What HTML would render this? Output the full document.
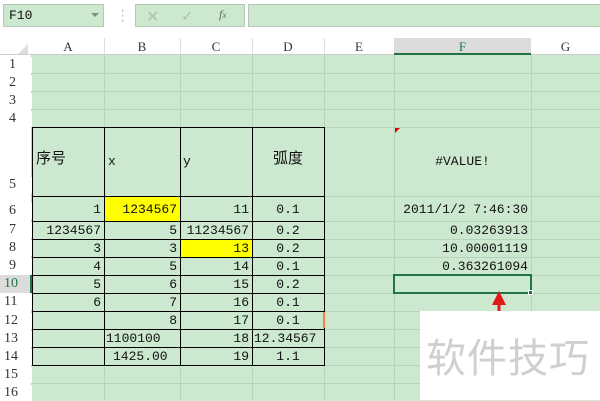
<!DOCTYPE html>
<html><head><meta charset="utf-8"><style>
*{margin:0;padding:0;box-sizing:border-box}
body{width:600px;height:400px;overflow:hidden;background:#cce8cf;position:relative;font-family:"Liberation Mono","Noto Sans CJK SC",monospace;font-size:13px;color:#111}
.a{position:absolute}
.vl{position:absolute;width:1px;background:#b5d4b9}
.hl{position:absolute;height:1px;background:#b5d4b9}
.bv{position:absolute;width:1px;background:#000}
.bh{position:absolute;height:1px;background:#000}
.c{position:absolute;height:18px;line-height:18px;white-space:nowrap}
.r{text-align:right}
.rh{position:absolute;left:0;width:32px;font-family:"Liberation Serif",serif;font-size:14px;padding-left:9px;color:#333;background:#fff}
.ch{position:absolute;top:38px;height:17px;line-height:17px;text-align:center;font-family:"Liberation Serif",serif;font-size:13px;color:#333}
</style></head><body>
<!-- toolbar -->
<div class="a" style="left:0;top:0;width:600px;height:55px;background:#fff"></div>
<div class="a" style="left:3px;top:4px;width:101px;height:23px;background:#cce8cf;border:1px solid #b8c8b8;font-family:'Liberation Mono',monospace;font-size:13px;line-height:21px;padding-left:5px">F10</div>
<div class="a" style="left:91px;top:13px;width:0;height:0;border-left:4px solid transparent;border-right:4px solid transparent;border-top:4px solid #888"></div>
<div class="a" style="left:119px;top:9px;color:#bbb;font-size:12px;line-height:5px">·<br>·<br>·</div>
<div class="a" style="left:135px;top:4px;width:110px;height:23px;background:#cce8cf;border:1px solid #b8c8b8"></div>
<div class="a" style="left:146px;top:7px;color:#b0bfb0;font-size:16px;font-family:'DejaVu Sans',sans-serif">✕</div>
<div class="a" style="left:181px;top:7px;color:#b0bfb0;font-size:15px;font-family:'DejaVu Sans',sans-serif">✓</div>
<div class="a" style="left:219px;top:7px;color:#666;font-size:12px;font-style:italic;font-family:'Liberation Serif',serif">f<span style="font-size:9px">x</span></div>
<div class="a" style="left:248px;top:4px;width:352px;height:23px;background:#cce8cf;border:1px solid #b8c8b8;border-right:none"></div>
<!-- column headers -->
<div class="a" style="left:0;top:38px;width:600px;height:17px;background:#fff;border-bottom:1px solid #ccc"></div>
<div class="a" style="left:18px;top:44px;width:0;height:0;border-left:10px solid transparent;border-bottom:10px solid #ddd"></div>
<div class="a" style="left:394px;top:38px;width:137px;height:17px;background:#dcdcdc;border-bottom:2px solid #217346"></div>
<div class="ch" style="left:32px;width:72px">A</div>
<div class="ch" style="left:104px;width:76px">B</div>
<div class="ch" style="left:180px;width:72px">C</div>
<div class="ch" style="left:252px;width:72px">D</div>
<div class="ch" style="left:324px;width:70px">E</div>
<div class="ch" style="left:394px;width:137px;color:#217346">F</div>
<div class="ch" style="left:531px;width:69px">G</div>
<div class="vl" style="left:104px;top:38px;height:17px;background:#ddd"></div>
<div class="vl" style="left:180px;top:38px;height:17px;background:#ddd"></div>
<div class="vl" style="left:252px;top:38px;height:17px;background:#ddd"></div>
<div class="vl" style="left:324px;top:38px;height:17px;background:#ddd"></div>
<!-- row headers -->
<div class="a" style="left:0;top:55px;width:32px;height:345px;background:#fff;border-right:1px solid #ccc"></div>
<div class="rh" style="top:57px">1</div>
<div class="rh" style="top:75px">2</div>
<div class="rh" style="top:93px">3</div>
<div class="rh" style="top:111px">4</div>
<div class="rh" style="top:177px">5</div>
<div class="rh" style="top:203px">6</div>
<div class="rh" style="top:222px">7</div>
<div class="rh" style="top:240px">8</div>
<div class="rh" style="top:258px">9</div>
<div class="a" style="left:0;top:275px;width:32px;height:18px;background:#dcdcdc;border-right:2px solid #217346"></div>
<div class="rh" style="top:276px;padding-left:4px;background:transparent;color:#217346">10</div>
<div class="rh" style="top:294px;padding-left:4px">11</div>
<div class="rh" style="top:313px;padding-left:4px">12</div>
<div class="rh" style="top:331px;padding-left:4px">13</div>
<div class="rh" style="top:349px;padding-left:4px">14</div>
<div class="rh" style="top:367px;padding-left:4px">15</div>
<div class="rh" style="top:385px;padding-left:4px">16</div>
<!-- grid lines -->
<div class="hl" style="left:32px;top:73px;width:568px"></div>
<div class="hl" style="left:32px;top:91px;width:568px"></div>
<div class="hl" style="left:32px;top:109px;width:568px"></div>
<div class="hl" style="left:32px;top:127px;width:568px"></div>
<div class="hl" style="left:32px;top:196px;width:568px"></div>
<div class="hl" style="left:32px;top:221px;width:568px"></div>
<div class="hl" style="left:32px;top:239px;width:568px"></div>
<div class="hl" style="left:32px;top:257px;width:568px"></div>
<div class="hl" style="left:32px;top:275px;width:568px"></div>
<div class="hl" style="left:32px;top:293px;width:568px"></div>
<div class="hl" style="left:32px;top:311px;width:568px"></div>
<div class="hl" style="left:32px;top:329px;width:568px"></div>
<div class="hl" style="left:32px;top:347px;width:568px"></div>
<div class="hl" style="left:32px;top:365px;width:568px"></div>
<div class="hl" style="left:32px;top:383px;width:568px"></div>
<div class="vl" style="left:104px;top:55px;height:345px"></div>
<div class="vl" style="left:180px;top:55px;height:345px"></div>
<div class="vl" style="left:252px;top:55px;height:345px"></div>
<div class="vl" style="left:324px;top:55px;height:345px"></div>
<div class="vl" style="left:394px;top:55px;height:345px"></div>
<div class="vl" style="left:531px;top:55px;height:345px"></div>
<!-- yellow -->
<div class="a" style="left:104px;top:196px;width:76px;height:25px;background:#ffff00"></div>
<div class="a" style="left:180px;top:239px;width:72px;height:18px;background:#ffff00"></div>
<!-- table borders -->
<div class="bh" style="left:32px;top:127px;width:293px"></div>
<div class="bh" style="left:32px;top:196px;width:293px"></div>
<div class="bh" style="left:32px;top:221px;width:293px"></div>
<div class="bh" style="left:32px;top:239px;width:293px"></div>
<div class="bh" style="left:32px;top:257px;width:293px"></div>
<div class="bh" style="left:32px;top:275px;width:293px"></div>
<div class="bh" style="left:32px;top:293px;width:293px"></div>
<div class="bh" style="left:32px;top:311px;width:293px"></div>
<div class="bh" style="left:32px;top:329px;width:293px"></div>
<div class="bh" style="left:32px;top:347px;width:293px"></div>
<div class="bh" style="left:32px;top:365px;width:293px"></div>
<div class="bv" style="left:32px;top:127px;height:238px"></div>
<div class="bv" style="left:104px;top:127px;height:238px"></div>
<div class="bv" style="left:180px;top:127px;height:238px"></div>
<div class="bv" style="left:252px;top:127px;height:238px"></div>
<div class="bv" style="left:324px;top:127px;height:238px"></div>
<div class="a" style="left:323px;top:312px;width:2px;height:16px;background:#f08050"></div>
<!-- cells -->
<div class="c" style="left:36px;top:151px;font-size:15px">序号</div>
<div class="c" style="left:108px;top:153px">x</div>
<div class="c" style="left:183px;top:153px">y</div>
<div class="c" style="left:252px;top:151px;width:72px;text-align:center;font-size:15px">弧度</div>
<div class="c r" style="left:32px;top:201px;width:69px">1</div>
<div class="c r" style="left:104px;top:201px;width:73px">1234567</div>
<div class="c r" style="left:180px;top:201px;width:69px">11</div>
<div class="c" style="left:252px;top:201px;width:72px;text-align:center">0.1</div>
<div class="c r" style="left:32px;top:222px;width:69px">1234567</div>
<div class="c r" style="left:104px;top:222px;width:73px">5</div>
<div class="c r" style="left:180px;top:222px;width:69px">11234567</div>
<div class="c" style="left:252px;top:222px;width:72px;text-align:center">0.2</div>
<div class="c r" style="left:32px;top:240px;width:69px">3</div>
<div class="c r" style="left:104px;top:240px;width:73px">3</div>
<div class="c r" style="left:180px;top:240px;width:69px">13</div>
<div class="c" style="left:252px;top:240px;width:72px;text-align:center">0.2</div>
<div class="c r" style="left:32px;top:258px;width:69px">4</div>
<div class="c r" style="left:104px;top:258px;width:73px">5</div>
<div class="c r" style="left:180px;top:258px;width:69px">14</div>
<div class="c" style="left:252px;top:258px;width:72px;text-align:center">0.1</div>
<div class="c r" style="left:32px;top:276px;width:69px">5</div>
<div class="c r" style="left:104px;top:276px;width:73px">6</div>
<div class="c r" style="left:180px;top:276px;width:69px">15</div>
<div class="c" style="left:252px;top:276px;width:72px;text-align:center">0.2</div>
<div class="c r" style="left:32px;top:294px;width:69px">6</div>
<div class="c r" style="left:104px;top:294px;width:73px">7</div>
<div class="c r" style="left:180px;top:294px;width:69px">16</div>
<div class="c" style="left:252px;top:294px;width:72px;text-align:center">0.1</div>
<div class="c r" style="left:104px;top:312px;width:73px">8</div>
<div class="c r" style="left:180px;top:312px;width:69px">17</div>
<div class="c" style="left:252px;top:312px;width:72px;text-align:center">0.1</div>
<div class="c" style="left:106px;top:330px">1100100</div>
<div class="c r" style="left:180px;top:330px;width:69px">18</div>
<div class="c" style="left:254px;top:330px">12.34567</div>
<div class="c" style="left:113px;top:348px">1425.00</div>
<div class="c r" style="left:180px;top:348px;width:69px">19</div>
<div class="c" style="left:252px;top:348px;width:72px;text-align:center">1.1</div>
<div class="c" style="left:394px;top:153px;width:137px;text-align:center">#VALUE!</div>
<div class="c r" style="left:394px;top:201px;width:134px">2011/1/2 7:46:30</div>
<div class="c r" style="left:394px;top:222px;width:134px">0.03263913</div>
<div class="c r" style="left:394px;top:240px;width:134px">10.00001119</div>
<div class="c r" style="left:394px;top:258px;width:134px">0.363261094</div>
<!-- red triangle -->
<div class="a" style="left:395px;top:128px;width:0;height:0;border-top:5px solid #d00;border-right:5px solid transparent"></div>
<!-- selection -->
<div class="a" style="left:393px;top:274px;width:139px;height:20px;border:2px solid #217346"></div>
<div class="a" style="left:528px;top:290px;width:5px;height:5px;background:#217346;border:1px solid #fff"></div>
<!-- arrow -->
<svg class="a" style="left:488px;top:290px" width="22" height="22"><polygon points="11,1 4,15 18,15" fill="#e01818"/><rect x="9.5" y="14" width="3" height="8" fill="#e01818"/></svg>
<!-- watermark -->
<div class="a" style="left:420px;top:311px;width:180px;height:89px;background:#fff"></div>
<div class="a" style="left:426px;top:330px;font-family:'Noto Sans CJK SC',sans-serif;font-size:40px;color:#cfcfcf;letter-spacing:1px;line-height:50px">软件技巧</div>
</body></html>
